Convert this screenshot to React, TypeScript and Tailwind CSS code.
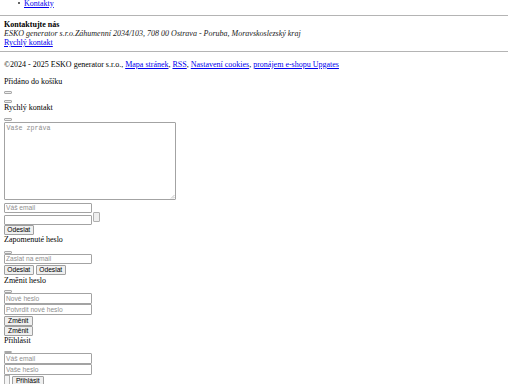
import React from "react";

const link = "text-[#0000ee] underline";
const inputCls =
  "block w-[88px] h-[10.5px] border border-[#a3a3a3] rounded-[1px] bg-white px-[1px] font-['Liberation_Sans',Arial,sans-serif] text-[6.67px] leading-[8px] text-black placeholder:text-[#8f8f8f] outline-none";
const btnCls =
  "block h-[10px] border border-[#a0a0a0] rounded-[1px] bg-[#efefef] font-['Liberation_Sans',Arial,sans-serif] text-[6.67px] leading-[8px] text-black text-center p-0";
const tinyBtn = "block w-[8px] h-[2.5px] border border-[#a8a8a8] rounded-[1px] bg-[#efefef] p-0";

export default function App() {
  return (
    <div className="font-['Liberation_Serif','Times_New_Roman',serif] text-[8px] leading-[9px] text-black bg-white px-[4px] h-[384px] overflow-hidden">
      <ul className="list-none pl-[13.5px] -mt-[1.5px] h-[9px]">
        <li className="flex items-center">
          <span className="block w-[2.5px] h-[2.5px] rounded-full bg-[#333] mr-[4px]" />
          <a className={link}>Kontakty</a>
        </li>
      </ul>
      <hr className="mt-[7.5px] -ml-[4px] border-0 border-t border-[#b4b4b4]" />
      <div className="mt-[4px]">
        <div className="font-bold h-[9px]">Kontaktujte nás</div>
        <div className="italic h-[9px] text-[#222]">
          ESKO generator s.r.o.Záhumenní 2034/103, 708 00 Ostrava - Poruba, Moravskoslezský kraj
        </div>
        <div className="h-[9px]">
          <a className={link}>Rychlý kontakt</a>
        </div>
      </div>
      <hr className="mt-[4px] -ml-[4px] border-0 border-t border-[#b4b4b4]" />
      <p className="mt-[7.5px] h-[9px]">
        ©2024 - 2025 ESKO generator s.r.o., <a className={link}>Mapa stránek</a>,{" "}
        <a className={link}>RSS</a>, <a className={link}>Nastavení cookies</a>,{" "}
        <a className={link}>pronájem e-shopu Upgates</a>
      </p>
      <p className="mt-[8px] h-[9px]">Přidáno do košíku</p>
      <button className={`${tinyBtn} mt-[5.5px]`} />
      <button className={`${tinyBtn} mt-[6.5px]`} />
      <div className="mt-[0.5px] h-[9px]">Rychlý kontakt</div>
      <button className={`${tinyBtn} mt-[6px]`} />
      <div className="relative mt-[1.5px] w-[171.5px] h-[77.5px]">
        <textarea
          placeholder="Vaše zpráva"
          className="block w-full h-full resize-none border border-[#a3a3a3] rounded-[1px] bg-white px-[1.5px] py-[1px] font-['Liberation_Mono',monospace] text-[6.67px] leading-[8px] placeholder:text-[#8f8f8f] outline-none"
        />
        <svg className="absolute right-[1px] bottom-[1px]" width="5" height="5" viewBox="0 0 5 5">
          <path d="M1 4.5 L4.5 1 M3 4.5 L4.5 3" stroke="#9a9a9a" strokeWidth="0.6" />
        </svg>
      </div>
      <input className={`${inputCls} mt-[3px]`} placeholder="Váš email" />
      <div className="flex items-start -mt-[1px]">
        <input className={`${inputCls} mt-[2.5px]`} />
        <button className="block ml-[0.7px] w-[7px] h-[10px] border border-[#b0b0b0] rounded-[1px] bg-[#efefef] p-0" />
      </div>
      <button className={`${btnCls} w-[29.5px] -mt-[0.5px]`}>Odeslat</button>
      <div className="mt-[0.5px] h-[9px]">Zapomenuté heslo</div>
      <button className={`${tinyBtn} mt-[7px]`} />
      <input className={inputCls} placeholder="Zaslat na email" />
      <div className="flex gap-[2.5px] mt-[1px]">
        <button className={`${btnCls} w-[29.5px]`}>Odeslat</button>
        <button className={`${btnCls} w-[29.5px]`}>Odeslat</button>
      </div>
      <div className="mt-[0.5px] h-[9px]">Změnit heslo</div>
      <button className={`${tinyBtn} mt-[5.5px]`} />
      <input className={`${inputCls} mt-[0.5px]`} placeholder="Nové heslo" />
      <input className={`${inputCls} mt-[0.5px]`} placeholder="Potvrdit nové heslo" />
      <button className={`${btnCls} w-[28.5px] mt-[1px]`}>Změnit</button>
      <button className={`${btnCls} w-[28.5px]`}>Změnit</button>
      <div className="h-[9px]">Přihlásit</div>
      <button className={`${tinyBtn} mt-[6px]`} />
      <input className={inputCls} placeholder="Váš email" />
      <input className={`${inputCls} mt-[0.5px]`} placeholder="Vaše heslo" />
      <div className="flex items-start gap-[1.5px]">
        <div className="w-[6px] h-[12px] border border-[#b0b0b0] bg-[#f5f5f5]" />
        <button className={`${btnCls} w-[32.5px] mt-[1.5px]`}>Přihlásit</button>
      </div>
    </div>
  );
}
